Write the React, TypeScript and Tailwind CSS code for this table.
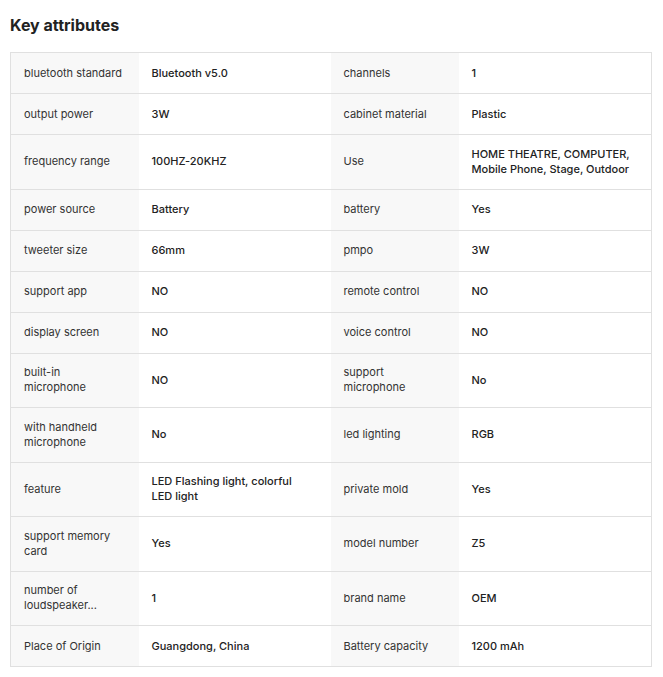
import React from 'react';

const rows: [string, string, string, string][] = [
  ['bluetooth standard', 'Bluetooth v5.0', 'channels', '1'],
  ['output power', '3W', 'cabinet material', 'Plastic'],
  ['frequency range', '100HZ-20KHZ', 'Use', 'HOME THEATRE, COMPUTER, Mobile Phone, Stage, Outdoor'],
  ['power source', 'Battery', 'battery', 'Yes'],
  ['tweeter size', '66mm', 'pmpo', '3W'],
  ['support app', 'NO', 'remote control', 'NO'],
  ['display screen', 'NO', 'voice control', 'NO'],
  ['built-in microphone', 'NO', 'support microphone', 'No'],
  ['with handheld microphone', 'No', 'led lighting', 'RGB'],
  ['feature', 'LED Flashing light, colorful LED light', 'private mold', 'Yes'],
  ['support memory card', 'Yes', 'model number', 'Z5'],
  ['number of loudspeaker...', '1', 'brand name', 'OEM'],
  ['Place of Origin', 'Guangdong, China', 'Battery capacity', '1200 mAh'],
];

export default function App() {
  return (
    <div className="w-[663px] min-h-[677px] bg-white px-[10px] pt-[15px] font-['Inter',sans-serif]">
      <h2 className="text-[16px] leading-[20px] font-bold text-[#222]">Key attributes</h2>
      <table className="mt-[17px] w-[641px] table-fixed border-collapse border border-[#e0e0e0] text-[11px] leading-[15px]">
        <colgroup>
          <col className="w-[128px]" />
          <col className="w-[192px]" />
          <col className="w-[128px]" />
          <col className="w-[193px]" />
        </colgroup>
        <tbody>
          {rows.map((r, i) => (
            <tr key={i} className="h-[41px] border-b border-[#e0e0e0]">
              <td className="bg-[#f8f8f8] pl-[13px] pr-[15px] py-[11.75px] text-[#333] align-middle">{r[0]}</td>
              <td className="pl-[13px] pr-[16px] py-[11.75px] text-[#222] font-medium align-middle">{r[1]}</td>
              <td className="bg-[#f8f8f8] pl-[13px] pr-[15px] py-[11.75px] text-[#333] align-middle">{r[2]}</td>
              <td className="pl-[13px] pr-[16px] py-[11.75px] text-[#222] font-medium align-middle">{r[3]}</td>
            </tr>
          ))}
        </tbody>
      </table>
    </div>
  );
}
